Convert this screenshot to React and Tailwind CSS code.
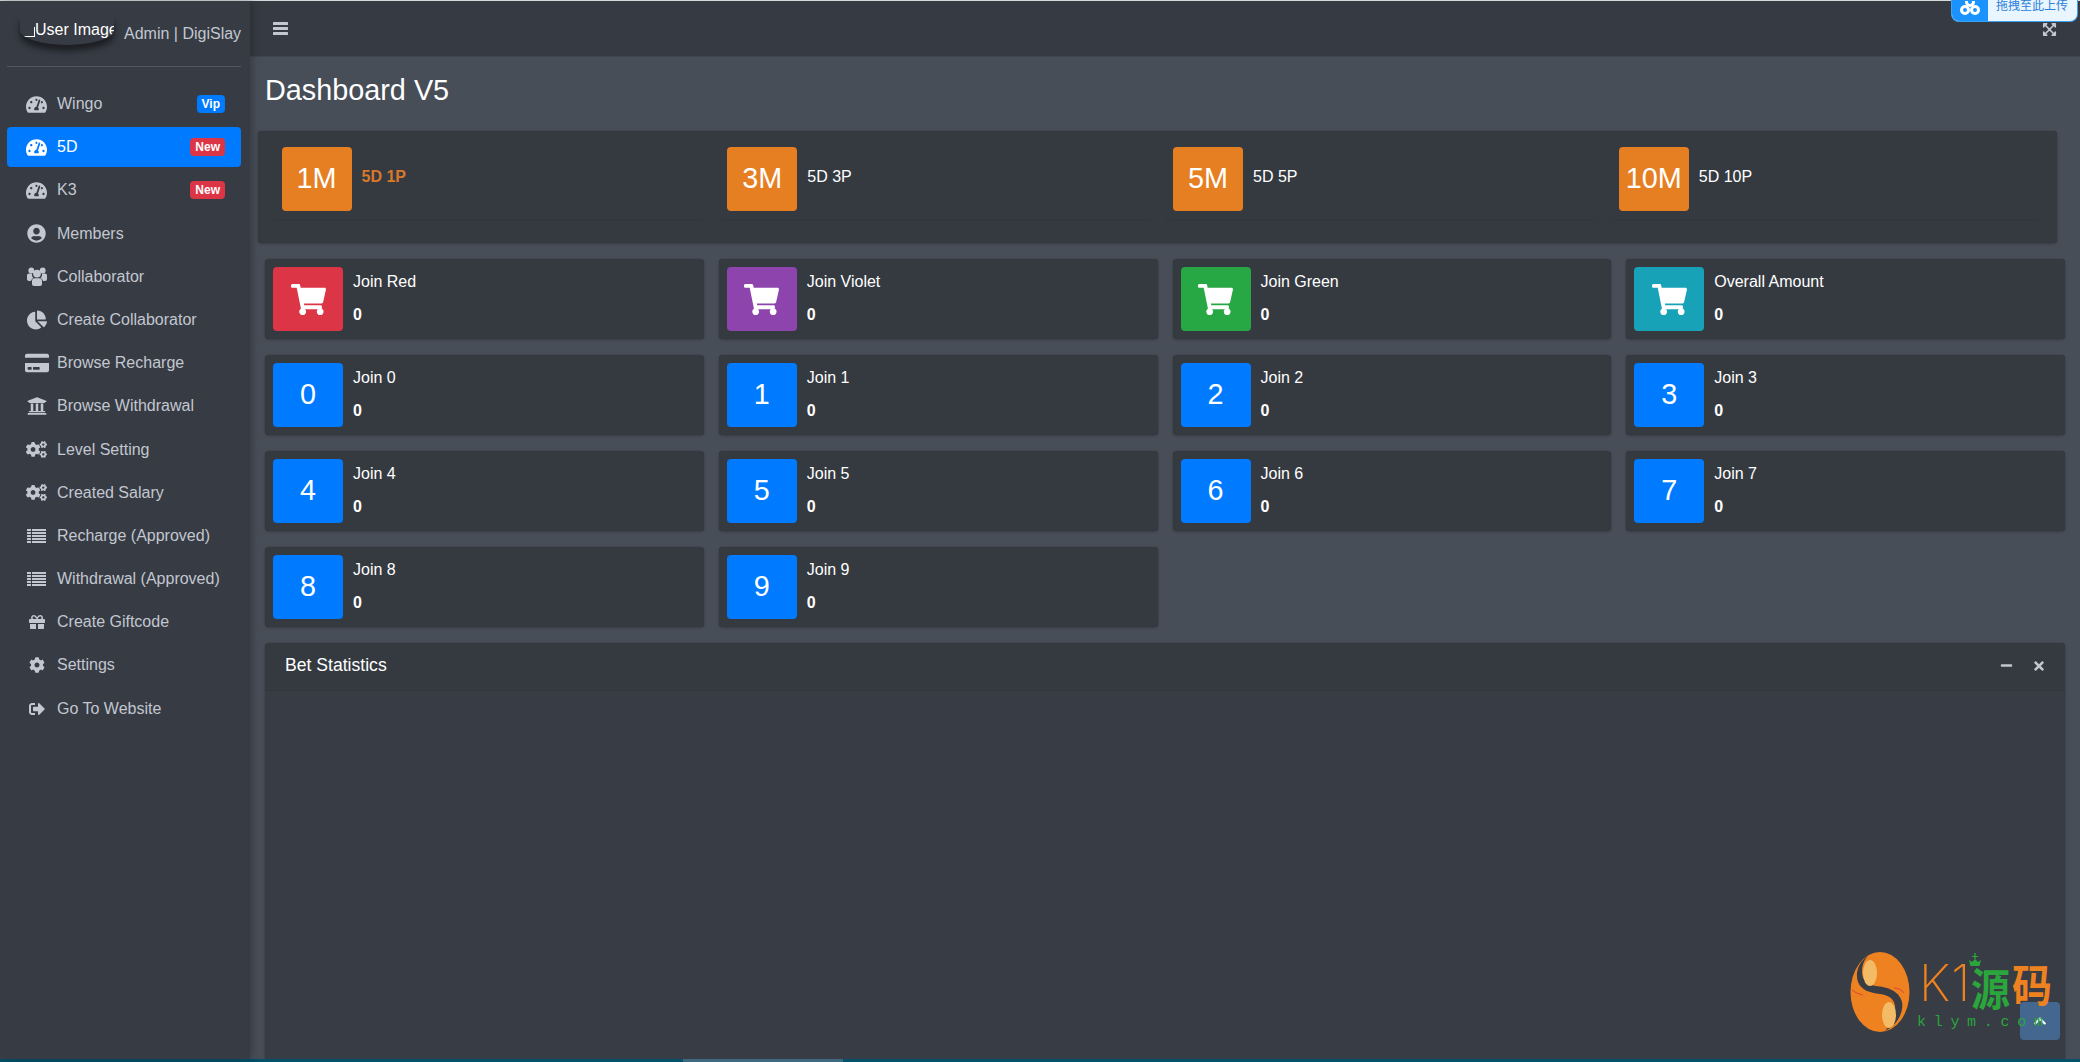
import {
  FaTachometerAlt,
  FaUserCircle,
  FaChartPie,
  FaCreditCard,
  FaUniversity,
  FaCogs,
  FaGift,
  FaCog,
  FaSignOutAlt,
  FaExpandArrowsAlt,
  FaShoppingCart,
  FaMinus,
  FaTimes,
  FaChevronUp
} from 'react-icons/fa'

function UsersIcon() {
  return (
    <svg width="20" height="19" viewBox="0 0 20 19" fill="currentColor">
      <circle cx="4.3" cy="3.4" r="2.9" />
      <circle cx="15.7" cy="3.4" r="2.9" />
      <circle cx="10" cy="6.6" r="3.9" />
      <path d="M0 8.5c0-1.2.8-2 2-2h3c-.3 2 .4 3.500 1.500 4.500-1.300.7-2.200 1.700-2.500 3H2c-1.200 0-2-.8-2-2zM20 8.500c0-1.200-.8-2-2-2h-3c.3 2-.4 3.500-1.500 4.500 1.300.7 2.200 1.700 2.500 3h2c1.200 0 2-.8 2-2z" />
      <path d="M5 14c0-1.700 1-2.800 2.600-2.800h4.800c1.600 0 2.600 1.100 2.600 2.800v3c0 1.200-.8 2-2 2H7c-1.200 0-2-.8-2-2z" />
    </svg>
  )
}

function RowsIcon() {
  const rows = [0, 3, 6, 9, 12]
  return (
    <svg width="19" height="14" viewBox="0 0 19 14" fill="currentColor">
      {rows.map((y) => (
        <g key={y}>
          <rect x="0" y={y} width="4" height="2" />
          <rect x="5" y={y} width="14" height="2" />
        </g>
      ))}
    </svg>
  )
}

function BarsIcon() {
  return (
    <svg width="15" height="13" viewBox="0 0 15 13" fill="currentColor">
      <rect width="15" height="3" rx="0.5" />
      <rect y="5" width="15" height="3" rx="0.5" />
      <rect y="10" width="15" height="3" rx="0.5" />
    </svg>
  )
}

const gauge = <FaTachometerAlt size={21} />

const menu = [
  { label: 'Wingo', icon: gauge, badge: 'Vip' },
  { label: '5D', icon: gauge, badge: 'New', active: true },
  { label: 'K3', icon: gauge, badge: 'New' },
  { label: 'Members', icon: <FaUserCircle size={19} /> },
  { label: 'Collaborator', icon: <UsersIcon /> },
  { label: 'Create Collaborator', icon: <FaChartPie size={20} /> },
  { label: 'Browse Recharge', icon: <FaCreditCard size={24} /> },
  { label: 'Browse Withdrawal', icon: <FaUniversity size={20} /> },
  { label: 'Level Setting', icon: <FaCogs size={21} /> },
  { label: 'Created Salary', icon: <FaCogs size={21} /> },
  { label: 'Recharge (Approved)', icon: <RowsIcon /> },
  { label: 'Withdrawal (Approved)', icon: <RowsIcon /> },
  { label: 'Create Giftcode', icon: <FaGift size={16} /> },
  { label: 'Settings', icon: <FaCog size={16} /> },
  { label: 'Go To Website', icon: <FaSignOutAlt size={16} /> }
]

const periods = [
  { short: '1M', label: '5D 1P', active: true },
  { short: '3M', label: '5D 3P' },
  { short: '5M', label: '5D 5P' },
  { short: '10M', label: '5D 10P' }
]

const joins = [
  { label: 'Join Red', color: 'bg-[#dc3545]' },
  { label: 'Join Violet', color: 'bg-[#8e44ad]' },
  { label: 'Join Green', color: 'bg-[#28a745]' },
  { label: 'Overall Amount', color: 'bg-[#17a2b8]' }
]

const numbers = [0, 1, 2, 3, 4, 5, 6, 7, 8, 9]

function SideItem({ item }) {
  return (
    <a
      className={`flex h-10 items-center rounded px-4 ${
        item.active ? 'bg-[#007bff] text-white' : 'text-[#c2c7d0]'
      }`}
    >
      <span className="flex w-[27px] shrink-0 items-center justify-center">{item.icon}</span>
      <span className="ml-[7px] flex-1 text-base">{item.label}</span>
      {item.badge && (
        <span
          className={`rounded px-[5px] py-[3px] text-xs leading-3 font-bold text-white ${
            item.badge === 'Vip' ? 'bg-[#007bff]' : 'bg-[#dc3545]'
          }`}
        >
          {item.badge}
        </span>
      )}
    </a>
  )
}

function Sidebar() {
  return (
    <aside className="relative z-10 flex w-[250px] shrink-0 flex-col bg-[#373b44] pr-[9px] pl-[7px] shadow-[2px_0_8px_rgba(0,0,0,0.25)]">
      <div className="flex h-[66px] items-start border-b border-[#4f5962]">
        <div className="mt-[14px] ml-[13px] flex h-[30px] w-[94px] shrink-0 items-center overflow-hidden rounded-b-[50%] whitespace-nowrap text-base leading-5 text-white shadow-[0_6px_6px_rgba(0,0,0,0.5)]">
          <span className="mt-[3px] h-[10px] w-[15px] shrink-0 border-r border-b border-white" />
          <span>User Image</span>
        </div>
        <span className="mt-[21px] ml-[10px] text-base leading-6 whitespace-nowrap text-[#c2c7d0]">
          Admin | DigiSlay
        </span>
      </div>
      <nav className="mt-[17px] flex flex-col gap-[3.2px]">
        {menu.map((item) => (
          <SideItem key={item.label} item={item} />
        ))}
      </nav>
    </aside>
  )
}

function PeriodBox({ item }) {
  return (
    <div className="flex h-20 items-center gap-2.5 rounded bg-[#353a41] p-2 shadow-[0_1px_2px_rgba(0,0,0,0.06)]">
      <div className="flex h-16 w-[70px] shrink-0 items-center justify-center rounded bg-[#e67e22] text-[28.8px] text-white">
        {item.short}
      </div>
      <span className={`mb-1 text-base ${item.active ? 'font-bold text-[#d9782a]' : 'text-white'}`}>
        {item.label}
      </span>
    </div>
  )
}

function InfoBox({ title, tile, children }) {
  return (
    <div className="flex h-20 items-center gap-2.5 rounded bg-[#353a41] p-2 shadow-[0_0_1px_rgba(0,0,0,0.4),0_1px_3px_rgba(0,0,0,0.2)]">
      <div
        className={`flex h-16 w-[70px] shrink-0 items-center justify-center rounded text-[28.8px] text-white ${tile}`}
      >
        {children}
      </div>
      <div className="mb-[2px] flex flex-col text-base leading-6 text-white">
        <span>{title}</span>
        <span className="mt-[9px] font-bold">0</span>
      </div>
    </div>
  )
}

function Watermark() {
  return (
    <div className="pointer-events-none absolute top-[952px] left-[1850px] z-30 h-[90px] w-[210px]">
      <svg className="absolute top-0 left-0" width="60" height="80" viewBox="0 0 60 80">
        <ellipse cx="30" cy="40" rx="29.5" ry="40" fill="#ee8120" />
        <path
          d="M18 4C8 10 5 22 8 30c3 8 12 11 22 12 8 1 14 4 15 12 1 8-3 18-10 25 12-5 19-19 17-29-3-12-16-15-26-16-8-1-14-6-14-14 0-7 2-12 6-16z"
          fill="#383c45"
        />
        <ellipse cx="20" cy="21" rx="7" ry="13" fill="#f4bb66" />
        <ellipse cx="39" cy="63" rx="7" ry="13" fill="#f4bb66" />
        <path d="M2 38c4 3 7 4 11 5M44 36c4 0 8 2 10 5" stroke="#e0423a" fill="none" />
      </svg>
      <span className="absolute top-[1px] left-[69px] font-['Inter',sans-serif] text-[50px] leading-[60px] font-extralight tracking-[1px] text-[#ee8120]">
        K1
      </span>
      {/* crown over the first glyph */}
      <svg className="absolute top-[1px] left-[118px]" width="14" height="16" viewBox="0 0 14 16" fill="#2aa63c">
        <path d="M6.300 0h1.400v3H10v1H7.700v2h-1.400V4H4V3h2.300zM1 7l3 2 3-3 3 3 3-2-1.500 6h-9z" />
      </svg>
      <span className="absolute top-[9px] left-[121px] origin-top scale-y-[1.15] font-['Noto_Sans_CJK_SC',sans-serif] text-[39px] leading-[44px] font-bold text-[#2aa63c]">
        源
      </span>
      <span className="absolute top-[6px] left-[162px] origin-top scale-y-[1.12] font-['Noto_Sans_CJK_SC',sans-serif] text-[40px] leading-[44px] font-bold text-[#ee8120]">
        码
      </span>
      <span className="absolute top-[62px] left-[67px] font-['Liberation_Mono',monospace] text-[15px] leading-[18px] tracking-[7.7px] text-[#2aa63c]">
        klym.com
      </span>
    </div>
  )
}

function UploadTip() {
  return (
    <div className="absolute top-0 left-[1951px] z-30 flex h-[22px] w-[127px] overflow-hidden rounded-b-lg border border-t-0 border-[#3ba4f5] bg-[#e9f5ff]">
      <div className="flex w-[36px] items-start justify-center bg-[#1a93ff] pt-[1px]">
        <svg width="22" height="14" viewBox="0 0 22 14" fill="none" stroke="white" strokeWidth="3">
          <circle cx="6" cy="9" r="3.500" />
          <circle cx="16" cy="9" r="3.500" />
          <circle cx="11" cy="1" r="3.500" />
        </svg>
      </div>
      <span className="ml-2 -mt-[2px] text-xs leading-4 whitespace-nowrap text-[#2a80d8]">拖拽至此上传</span>
    </div>
  )
}

export default function App() {
  return (
    <div className="relative flex h-screen flex-col overflow-hidden bg-[#454c56] font-['Liberation_Sans','Noto_Sans_CJK_SC',sans-serif]">
      <div className="h-px shrink-0 bg-[#d5d7da]" />
      <div className="flex min-h-0 flex-1">
        <Sidebar />

        <main className="flex min-w-0 flex-1 flex-col bg-[#474e58]">
          {/* header */}
          <header className="flex h-14 shrink-0 items-start justify-between border-b border-[#40464f] bg-[#363a42] pt-[21px] pr-[23px] pl-[23px] text-[#c2c7d0]">
            <BarsIcon />
            <FaExpandArrowsAlt size={15} />
          </header>

          {/* title */}
          <div className="flex h-[74px] shrink-0 items-center px-[15px] pb-[8px]">
            <h1 className="text-[28.8px] leading-none text-white">Dashboard V5</h1>
          </div>

          <div className="flex min-h-0 flex-1 flex-col px-[15px]">
            {/* period tabs */}
            <section className="mr-2 mb-4 ml-[-7px] grid shrink-0 grid-cols-4 rounded bg-[#353a41] p-2 pb-6 shadow-[0_0_1px_rgba(0,0,0,0.4),0_1px_3px_rgba(0,0,0,0.2)]">
              {periods.map((p) => (
                <div key={p.short} className="px-[7.5px]">
                  <PeriodBox item={p} />
                </div>
              ))}
            </section>

            {/* join boxes */}
            <section className="grid shrink-0 grid-cols-4 gap-x-[15px] gap-y-4">
              {joins.map((j) => (
                <InfoBox key={j.label} title={j.label} tile={j.color}>
                  <FaShoppingCart size={35} />
                </InfoBox>
              ))}
              {numbers.map((n) => (
                <InfoBox key={n} title={`Join ${n}`} tile="bg-[#007bff]">
                  {n}
                </InfoBox>
              ))}
            </section>

            {/* bet statistics */}
            <section className="mt-4 min-h-0 flex-1 rounded-t bg-[#383c45] shadow-[0_0_1px_rgba(0,0,0,0.4),0_1px_3px_rgba(0,0,0,0.2)]">
              <div className="flex h-12 items-center justify-between rounded-t border-b border-[#32363d] bg-[#353a41] pr-[19px] pb-[2px] pl-5 text-white">
                <h3 className="text-[17.6px]">Bet Statistics</h3>
                <div className="flex items-center gap-[19px] text-[#c2c7d0]">
                  <FaMinus size={13} />
                  <FaTimes size={14} />
                </div>
              </div>
            </section>
          </div>
        </main>
      </div>

      {/* horizontal scrollbar */}
      <div className="flex h-[3px] shrink-0 bg-[#05506b] pl-[683px]">
        <div className="h-full w-[160px] bg-[#3e6a80]" />
      </div>

      <UploadTip />
      <Watermark />
      <button className="absolute right-5 bottom-[22px] z-20 flex h-[38px] w-10 items-center justify-center rounded bg-[#44678f] text-white">
        <FaChevronUp size={14} />
      </button>
    </div>
  )
}
